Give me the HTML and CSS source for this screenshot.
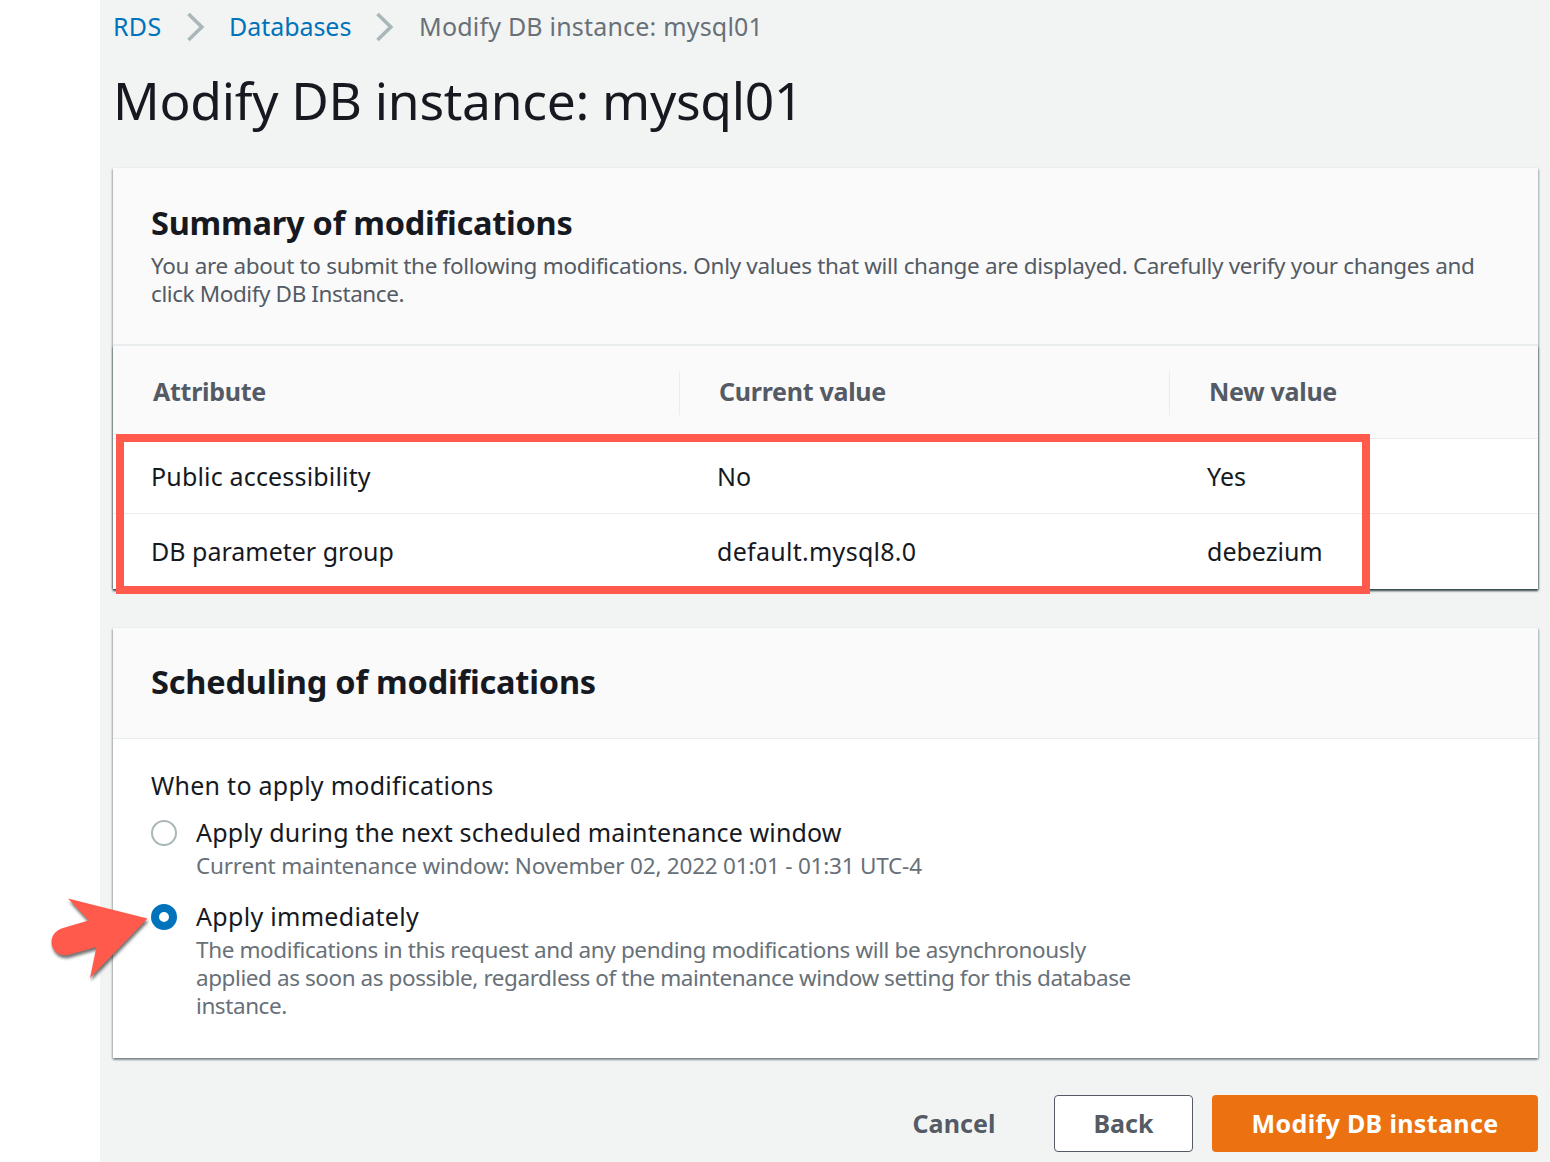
FILE: index.html
```html
<!DOCTYPE html>
<html lang="en">
<head>
<meta charset="utf-8">
<title>Modify DB instance: mysql01</title>
<link rel="stylesheet" href="styles.css">
</head>
<body>
<main class="page">
  <nav class="breadcrumb">
    <a class="crumb-rds" href="#">RDS</a>
    <svg class="chevron" width="18" height="30" viewBox="0 0 18 30"><path d="M1.5 2 L14.8 15 L1.5 28" fill="none" stroke="#aab7b8" stroke-width="3.6"/></svg>
    <a class="crumb-db" href="#">Databases</a>
    <svg class="chevron" width="18" height="30" viewBox="0 0 18 30"><path d="M1.5 2 L14.8 15 L1.5 28" fill="none" stroke="#aab7b8" stroke-width="3.6"/></svg>
    <span class="crumb-current">Modify DB instance: mysql01</span>
  </nav>
  <h1>Modify DB instance: mysql01</h1>

  <section class="card summary">
    <header class="summary-head">
      <h2>Summary of modifications</h2>
      <p class="lead">You are about to submit the following modifications. Only values that will change are displayed. Carefully verify your changes and<br><span class="lead-end">click Modify DB Instance.</span></p>
    </header>
    <div class="table">
      <div class="row head">
        <div class="cell">Attribute</div>
        <div class="cell">Current value</div>
        <div class="cell">New value</div>
      </div>
      <div class="row">
        <div class="cell wide">Public accessibility</div>
        <div class="cell">No</div>
        <div class="cell">Yes</div>
      </div>
      <div class="row">
        <div class="cell">DB parameter group</div>
        <div class="cell wider">default.mysql8.0</div>
        <div class="cell">debezium</div>
      </div>
      <div class="highlight"></div>
    </div>
  </section>

  <section class="card schedule">
    <header class="schedule-head"><h2>Scheduling of modifications</h2></header>
    <div class="schedule-body">
      <div class="question">When to apply modifications</div>
      <div class="option">
        <span class="radio"></span>
        <div>
          <div class="label">Apply during the next scheduled maintenance window</div>
          <div class="hint window">Current maintenance window: November 02, 2022 01:01 - 01:31 UTC-4</div>
        </div>
      </div>
      <div class="option">
        <span class="radio checked"></span>
        <div>
          <div class="label now">Apply immediately</div>
          <div class="hint">The modifications in this request and any pending modifications will be asynchronously<br><span class="hint-tail">applied as soon as possible, regardless of the maintenance window setting for this database<br>instance.</span></div>
        </div>
        <svg class="pointer" width="110" height="96" viewBox="45 892 110 96"><path d="M147.500 918.500 L68 898.500 L88.500 920.500 L63 928 C55 930.500 51.500 936 51.500 942 C51.500 950 58 956.500 68 955 L96.500 947 L90 978 Z" fill="#ff5a4c"/></svg>
      </div>
    </div>
  </section>

  <footer class="actions">
    <button class="btn cancel">Cancel</button>
    <button class="btn back">Back</button>
    <button class="btn primary">Modify DB instance</button>
  </footer>
</main>
</body>
</html>
```

FILE: styles.css
```css
* { box-sizing: border-box; }
body { margin: 0; background: #fff; font-family: "Noto Sans", "Open Sans", sans-serif; font-size: 25px; color: #16191f; overflow: hidden; }
h1, h2, p { margin: 0; }
.page { margin-left: 100px; height: 1162px; padding: 8px 12px 0 13px; background: #f2f4f4; }

.breadcrumb { display: flex; align-items: center; height: 36px; line-height: 36px; color: #687078; white-space: nowrap; }
.breadcrumb a { color: #0073bb; text-decoration: none; }
.crumb-rds { width: 74px; letter-spacing: .3px; }
.crumb-db { width: 147px; margin-left: 24px; letter-spacing: -.05px; }
.crumb-current { margin-left: 25px; letter-spacing: .2px; }
.chevron { flex: none; margin-top: 2px; }
h1 { font-size: 51.5px; font-weight: 400; height: 124px; line-height: 112px; letter-spacing: -.28px; }

.card { background: #fff; box-shadow: 0 -1px 0 #eaeded, 0 2px 2px rgba(0, 28, 36, .3), 1px 1px 2px rgba(0, 28, 36, .22), -1px 1px 2px rgba(0, 28, 36, .22); }
h2 { font-size: 32.5px; font-weight: 700; line-height: 44px; letter-spacing: -.23px; }
.schedule-head h2 { letter-spacing: -.19px; }
.summary { height: 421px; }
.summary-head { height: 178px; padding: 33px 38px 0; background: #fafafa; border-bottom: 2px solid #eaeded; }
.lead { margin-top: 7px; font-size: 22.5px; line-height: 28px; letter-spacing: -.315px; color: #545b64; white-space: nowrap; }
.lead-end { letter-spacing: -.4px; }

.table { position: relative; box-shadow: 0 2px 2px rgba(0, 28, 36, .5), 0 0 2px rgba(0, 28, 36, .4); clip-path: inset(0 -4px -5px -4px); background: #fff; }
.row { display: grid; grid-template-columns: 566px 490px 1fr; height: 75px; line-height: 75px; border-bottom: 1px solid #eaeded; }
.row:nth-child(3) { border-bottom: 0; }
.cell { padding-left: 38px; }
.wide { letter-spacing: .17px; }
.wider { letter-spacing: .28px; }
.head { height: 93px; line-height: 91px; background: #fafafa; color: #545b64; font-weight: 700; letter-spacing: -.28px; }
.head .cell { padding-left: 40px; }
.head .cell + .cell { background: linear-gradient(#eaeded, #eaeded) 0 25px / 1px 44px no-repeat; }
.highlight { position: absolute; left: 3px; top: 88px; width: 1254px; height: 160px; border: 8px solid #ff5a4c; }

.schedule { height: 430px; margin-top: 39px; }
.schedule-head { height: 111px; padding: 32px 38px 0; background: #fafafa; border-bottom: 1px solid #eaeded; }
.schedule-body { padding: 28px 38px 0; }
.question { height: 47px; line-height: 36px; letter-spacing: .27px; }
.option { position: relative; display: flex; gap: 19px; min-height: 84px; }
.radio { flex: none; width: 26px; height: 26px; margin-top: 6px; border: 2px solid #aab7b8; border-radius: 50%; background: #fff; }
.radio.checked { border: 8px solid #0073bb; }
.label { height: 38px; line-height: 36px; letter-spacing: .15px; }
.label.now { letter-spacing: .3px; }
.hint { font-size: 22.5px; line-height: 28px; letter-spacing: -.385px; color: #687078; white-space: nowrap; }
.hint.window { letter-spacing: -.21px; }
.hint-tail { letter-spacing: -.42px; }
.pointer { position: absolute; left: -106px; top: -6px; filter: drop-shadow(1px 3px 1.5px rgba(0, 0, 0, .55)); }

.actions { display: flex; justify-content: flex-end; margin-top: 37px; }
.btn { height: 57px; padding: 0; border: 0; border-radius: 4px; background: none; color: #545b64; font: 700 25px "Noto Sans", "Open Sans", sans-serif; line-height: 55px; }
.cancel { width: 164px; margin-right: 18px; letter-spacing: .1px; }
.back { width: 139px; margin-right: 19px; border: 1px solid #545b64; background: #fff; }
.primary { width: 326px; background: #ec7211; color: #fff; letter-spacing: .35px; }
```
